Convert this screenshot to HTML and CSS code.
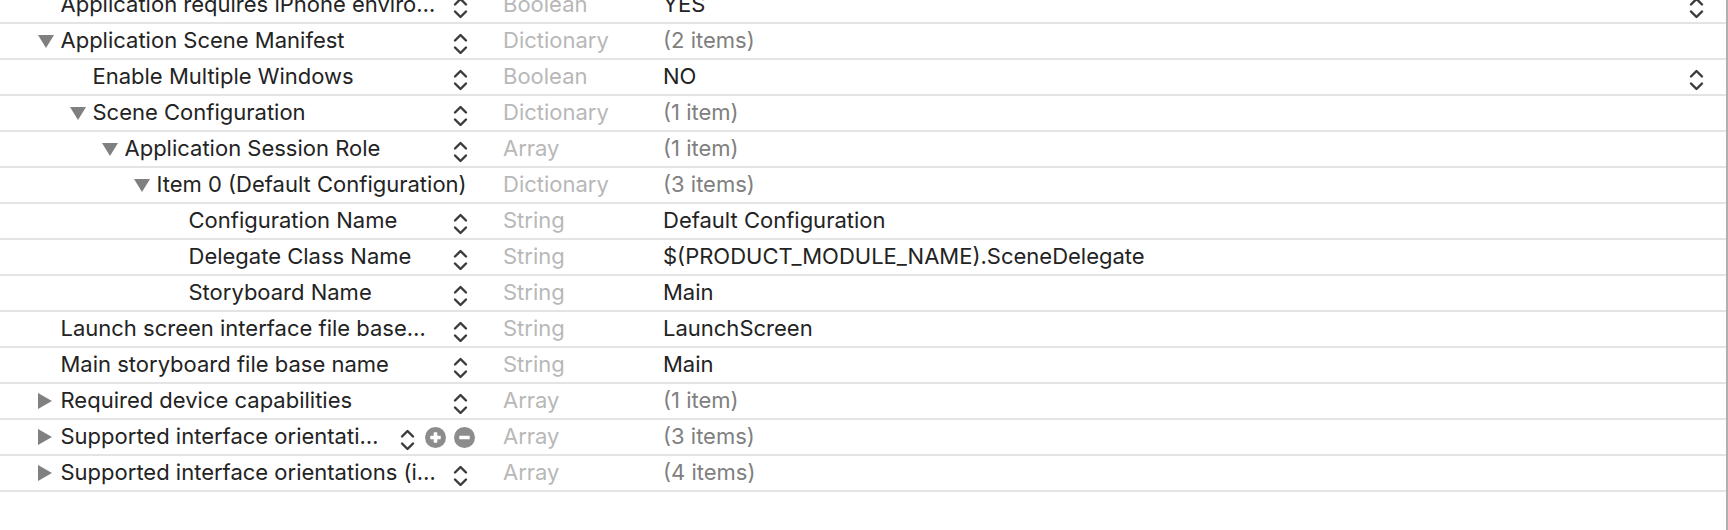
FILE: index.html
```html
<!DOCTYPE html>
<html>
<head>
<meta charset="utf-8">
<link rel="stylesheet" href="styles.css">
</head>
<body>
<div class="window">
  <div class="plist">

    <div class="row">
      <div class="key l0"><span class="tri"></span><span class="name">Application requires iPhone enviro…</span>
        <span class="stepper"><svg width="15" height="24" viewBox="0 0 15 24"><path d="M2 8.5L7.5 3L13 8.5M2 15.5L7.5 21L13 15.5" fill="none" stroke="#3a3a3a" stroke-width="2.4" stroke-linecap="round" stroke-linejoin="round"/></svg></span></div>
      <div class="type">Boolean</div>
      <div class="value"><span>YES</span>
        <span class="stepper right"><svg width="15" height="24" viewBox="0 0 15 24"><path d="M2 8.5L7.5 3L13 8.5M2 15.5L7.5 21L13 15.5" fill="none" stroke="#3a3a3a" stroke-width="2.4" stroke-linecap="round" stroke-linejoin="round"/></svg></span></div>
    </div>

    <div class="row">
      <div class="key l0"><span class="tri"><svg width="16" height="13" viewBox="0 0 16 13"><polygon points="0,0 16,0 8,13" fill="#808080"/></svg></span><span class="name">Application Scene Manifest</span>
        <span class="stepper"><svg width="15" height="24" viewBox="0 0 15 24"><path d="M2 8.5L7.5 3L13 8.5M2 15.5L7.5 21L13 15.5" fill="none" stroke="#3a3a3a" stroke-width="2.4" stroke-linecap="round" stroke-linejoin="round"/></svg></span></div>
      <div class="type">Dictionary</div>
      <div class="value muted"><span>(2 items)</span></div>
    </div>

    <div class="row">
      <div class="key l1"><span class="tri"></span><span class="name">Enable Multiple Windows</span>
        <span class="stepper"><svg width="15" height="24" viewBox="0 0 15 24"><path d="M2 8.5L7.5 3L13 8.5M2 15.5L7.5 21L13 15.5" fill="none" stroke="#3a3a3a" stroke-width="2.4" stroke-linecap="round" stroke-linejoin="round"/></svg></span></div>
      <div class="type">Boolean</div>
      <div class="value"><span>NO</span>
        <span class="stepper right"><svg width="15" height="24" viewBox="0 0 15 24"><path d="M2 8.5L7.5 3L13 8.5M2 15.5L7.5 21L13 15.5" fill="none" stroke="#3a3a3a" stroke-width="2.4" stroke-linecap="round" stroke-linejoin="round"/></svg></span></div>
    </div>

    <div class="row">
      <div class="key l1"><span class="tri"><svg width="16" height="13" viewBox="0 0 16 13"><polygon points="0,0 16,0 8,13" fill="#808080"/></svg></span><span class="name">Scene Configuration</span>
        <span class="stepper"><svg width="15" height="24" viewBox="0 0 15 24"><path d="M2 8.5L7.5 3L13 8.5M2 15.5L7.5 21L13 15.5" fill="none" stroke="#3a3a3a" stroke-width="2.4" stroke-linecap="round" stroke-linejoin="round"/></svg></span></div>
      <div class="type">Dictionary</div>
      <div class="value muted"><span>(1 item)</span></div>
    </div>

    <div class="row">
      <div class="key l2"><span class="tri"><svg width="16" height="13" viewBox="0 0 16 13"><polygon points="0,0 16,0 8,13" fill="#808080"/></svg></span><span class="name">Application Session Role</span>
        <span class="stepper"><svg width="15" height="24" viewBox="0 0 15 24"><path d="M2 8.5L7.5 3L13 8.5M2 15.5L7.5 21L13 15.5" fill="none" stroke="#3a3a3a" stroke-width="2.4" stroke-linecap="round" stroke-linejoin="round"/></svg></span></div>
      <div class="type">Array</div>
      <div class="value muted"><span>(1 item)</span></div>
    </div>

    <div class="row">
      <div class="key l3"><span class="tri"><svg width="16" height="13" viewBox="0 0 16 13"><polygon points="0,0 16,0 8,13" fill="#808080"/></svg></span><span class="name">Item 0 (Default Configuration)</span></div>
      <div class="type">Dictionary</div>
      <div class="value muted"><span>(3 items)</span></div>
    </div>

    <div class="row">
      <div class="key l4"><span class="tri"></span><span class="name">Configuration Name</span>
        <span class="stepper"><svg width="15" height="24" viewBox="0 0 15 24"><path d="M2 8.5L7.5 3L13 8.5M2 15.5L7.5 21L13 15.5" fill="none" stroke="#3a3a3a" stroke-width="2.4" stroke-linecap="round" stroke-linejoin="round"/></svg></span></div>
      <div class="type">String</div>
      <div class="value"><span>Default Configuration</span></div>
    </div>

    <div class="row">
      <div class="key l4"><span class="tri"></span><span class="name">Delegate Class Name</span>
        <span class="stepper"><svg width="15" height="24" viewBox="0 0 15 24"><path d="M2 8.5L7.5 3L13 8.5M2 15.5L7.5 21L13 15.5" fill="none" stroke="#3a3a3a" stroke-width="2.4" stroke-linecap="round" stroke-linejoin="round"/></svg></span></div>
      <div class="type">String</div>
      <div class="value"><span>$(PRODUCT_MODULE_NAME).SceneDelegate</span></div>
    </div>

    <div class="row">
      <div class="key l4"><span class="tri"></span><span class="name">Storyboard Name</span>
        <span class="stepper"><svg width="15" height="24" viewBox="0 0 15 24"><path d="M2 8.5L7.5 3L13 8.5M2 15.5L7.5 21L13 15.5" fill="none" stroke="#3a3a3a" stroke-width="2.4" stroke-linecap="round" stroke-linejoin="round"/></svg></span></div>
      <div class="type">String</div>
      <div class="value"><span>Main</span></div>
    </div>

    <div class="row">
      <div class="key l0"><span class="tri"></span><span class="name">Launch screen interface file base…</span>
        <span class="stepper"><svg width="15" height="24" viewBox="0 0 15 24"><path d="M2 8.5L7.5 3L13 8.5M2 15.5L7.5 21L13 15.5" fill="none" stroke="#3a3a3a" stroke-width="2.4" stroke-linecap="round" stroke-linejoin="round"/></svg></span></div>
      <div class="type">String</div>
      <div class="value"><span>LaunchScreen</span></div>
    </div>

    <div class="row">
      <div class="key l0"><span class="tri"></span><span class="name">Main storyboard file base name</span>
        <span class="stepper"><svg width="15" height="24" viewBox="0 0 15 24"><path d="M2 8.5L7.5 3L13 8.5M2 15.5L7.5 21L13 15.5" fill="none" stroke="#3a3a3a" stroke-width="2.4" stroke-linecap="round" stroke-linejoin="round"/></svg></span></div>
      <div class="type">String</div>
      <div class="value"><span>Main</span></div>
    </div>

    <div class="row">
      <div class="key l0"><span class="tri"><svg width="14" height="16" viewBox="0 0 14 16"><polygon points="0,0 14,8 0,16" fill="#808080"/></svg></span><span class="name">Required device capabilities</span>
        <span class="stepper"><svg width="15" height="24" viewBox="0 0 15 24"><path d="M2 8.5L7.5 3L13 8.5M2 15.5L7.5 21L13 15.5" fill="none" stroke="#3a3a3a" stroke-width="2.4" stroke-linecap="round" stroke-linejoin="round"/></svg></span></div>
      <div class="type">Array</div>
      <div class="value muted"><span>(1 item)</span></div>
    </div>

    <div class="row">
      <div class="key l0"><span class="tri"><svg width="14" height="16" viewBox="0 0 14 16"><polygon points="0,0 14,8 0,16" fill="#808080"/></svg></span><span class="name">Supported interface orientati…</span>
        <span class="controls">
          <span class="stepper inline"><svg width="15" height="24" viewBox="0 0 15 24"><path d="M2 8.5L7.5 3L13 8.5M2 15.5L7.5 21L13 15.5" fill="none" stroke="#3a3a3a" stroke-width="2.4" stroke-linecap="round" stroke-linejoin="round"/></svg></span>
          <span class="circle"><svg width="21" height="21" viewBox="0 0 21 21"><circle cx="10.5" cy="10.5" r="10.5" fill="#8c8c8c"/><rect x="5.3" y="8.7" width="10.4" height="3.6" rx="0.6" fill="#fff"/><rect x="8.7" y="5.3" width="3.6" height="10.4" rx="0.6" fill="#fff"/></svg></span>
          <span class="circle"><svg width="21" height="21" viewBox="0 0 21 21"><circle cx="10.5" cy="10.5" r="10.5" fill="#8c8c8c"/><rect x="5.3" y="8.7" width="10.4" height="3.6" rx="0.6" fill="#fff"/></svg></span>
        </span></div>
      <div class="type">Array</div>
      <div class="value muted"><span>(3 items)</span></div>
    </div>

    <div class="row">
      <div class="key l0"><span class="tri"><svg width="14" height="16" viewBox="0 0 14 16"><polygon points="0,0 14,8 0,16" fill="#808080"/></svg></span><span class="name">Supported interface orientations (i…</span>
        <span class="stepper"><svg width="15" height="24" viewBox="0 0 15 24"><path d="M2 8.5L7.5 3L13 8.5M2 15.5L7.5 21L13 15.5" fill="none" stroke="#3a3a3a" stroke-width="2.4" stroke-linecap="round" stroke-linejoin="round"/></svg></span></div>
      <div class="type">Array</div>
      <div class="value muted"><span>(4 items)</span></div>
    </div>

  </div>
  <div class="edge"></div>
</div>
</body>
</html>
```

FILE: styles.css
```css
html, body {
  margin: 0;
  padding: 0;
  background: #ffffff;
}

body {
  width: 1728px;
  height: 530px;
  overflow: hidden;
  font-family: Inter, "Noto Sans", "Liberation Sans", sans-serif;
  font-size: 22px;
  color: #232323;
}

.window {
  display: flex;
  height: 530px;
}

.plist {
  flex: 1;
  margin-top: -12px;
}

.edge {
  width: 2px;
  flex: none;
  background: #b0b0b0;
}

.row {
  display: grid;
  grid-template-columns: 480px 183px 1fr;
  height: 34px;
  border-bottom: 2px solid #e4e4e4;
  align-items: center;
}

.key {
  display: flex;
  align-items: center;
  height: 100%;
  min-width: 0;
}

.l0 { padding-left: 38px; }
.l1 { padding-left: 70px; }
.l2 { padding-left: 102px; }
.l3 { padding-left: 134px; }
.l4 { padding-left: 166px; }

.tri {
  flex: none;
  width: 22.5px;
  display: flex;
  align-items: center;
}

.tri svg {
  display: block;
}

.name {
  flex: 1;
  min-width: 0;
  white-space: nowrap;
  overflow: hidden;
  color: #232323;
  padding-bottom: 2px;
}

.stepper {
  flex: none;
  width: 15px;
  height: 24px;
  margin: 6px 12px 0 8px;
  display: block;
}

.stepper svg {
  display: block;
}

.stepper.right {
  margin: 6px 22px 0 0;
}

.controls {
  flex: none;
  display: flex;
  align-items: center;
  gap: 8px;
  margin-right: 5px;
  margin-left: 8px;
}

.stepper.inline {
  margin: 6px 2px 0 0;
}

.circle {
  display: block;
  width: 21px;
  height: 21px;
}

.circle svg {
  display: block;
}

.type {
  padding-left: 23px;
  padding-bottom: 2px;
  color: #b8b8b8;
  white-space: nowrap;
}

.value {
  display: flex;
  align-items: center;
  justify-content: space-between;
  height: 100%;
  color: #232323;
  white-space: nowrap;
}

.value > span:first-child {
  padding-bottom: 2px;
}

.value.muted {
  color: #808080;
}
```
